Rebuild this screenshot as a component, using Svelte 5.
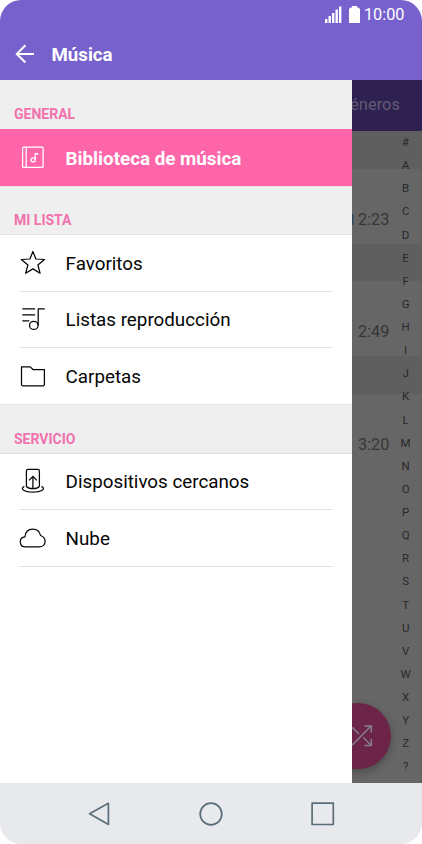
<script>
  const groups = [
    { title: 'GENERAL', items: [{ icon: 'library', label: 'Biblioteca de música', active: true }] },
    {
      title: 'MI LISTA',
      items: [
        { icon: 'star', label: 'Favoritos' },
        { icon: 'playlist', label: 'Listas reproducción' },
        { icon: 'folder', label: 'Carpetas' }
      ]
    },
    {
      title: 'SERVICIO',
      items: [
        { icon: 'device', label: 'Dispositivos cercanos' },
        { icon: 'cloud', label: 'Nube' }
      ]
    }
  ];
  const letters = [...'#ABCDEFGHIJKLMNOPQRSTUVWXYZ?'];
  const songs = ['2:23', '2:49', '3:20'];
</script>

<div class="phone">
  <header>
    <div class="status">
      <svg class="signal" width="17" height="17" viewBox="0 0 17 17" fill="#fff">
        <path d="M0 13h2.4v4H0zM3.5 10h2.4v7H3.5zM7 7h2.4v10H7zM10.5 3.5h2.4V17h-2.4zM14 .5h2.4V17H14z" />
      </svg>
      <svg class="battery" width="11" height="17" viewBox="0 0 11 17" fill="#fff">
        <path d="M3 0h5v1.6h1.5L11 3v14H0V3l1.5-1.4H3z" />
      </svg>
      <span class="clock">10:00</span>
    </div>
    <div class="title">
      <svg width="20" height="20" viewBox="0 0 20 20" fill="none" stroke="#fff" stroke-width="2">
        <path d="M19 9.9H2M10.4 1.3 1.8 9.9l8.6 8.6" />
      </svg>
      <h1>Música</h1>
    </div>
  </header>

  <main>
    <nav class="drawer">
      {#each groups as group}
        <h2>{group.title}</h2>
        <ul>
          {#each group.items as item}
            <li class:active={item.active}>
              <svg class="icon" width="28" height="28" viewBox="0 0 28 28">
                {#if item.icon === 'library'}
                  <rect x="3.6" y="4" width="20.5" height="20.4" rx="1" />
                  <path d="M7.2 4v20.4M16.2 16.9V10.7h2.4v1.4" />
                  <circle cx="14.2" cy="16.9" r="2" />
                {:else if item.icon === 'star'}
                  <path d="m13.9 2.5 3 7.5 8.6.5-6.6 5.5 2.2 8.3-7.2-4.4-7.3 4.4 2.3-8.3-6.6-5.5 8.6-.5z" />
                {:else if item.icon === 'playlist'}
                  <path d="M3.3 3.8h12.8M3.3 9.8h12.8M3.3 15.9h7M19.2 20.3V3.8h6.5" />
                  <ellipse cx="14.8" cy="20.4" rx="4.3" ry="4" />
                {:else if item.icon === 'folder'}
                  <path d="M2.5 4.9h8.7l2.8 2.6h11.4v15.4l-1 1H3.5l-1-1z" />
                {:else if item.icon === 'device'}
                  <path d="M7.4 19.5V4q0-1.7 1.7-1.7h9.6q1.7 0 1.7 1.7v15.5M13.9 21.6V9.6M10 13.4l3.9-4 3.9 4M5.3 19.4c-5 2.6.3 5.6 8.6 5.6s13.6-3 8.6-5.6M7.4 19.5c1.4 1.5 3.4 2.1 6.5 2.1s5.1-.6 6.5-2.1" />
                {:else}
                  <path d="M6.7 22.9c-3.5 0-5.4-2.3-5.4-5 0-2.8 1.8-4.8 4.6-5 .1-4.5 3.3-7.8 7.7-7.8 4 0 7.2 2.5 7.9 6.4 2.9.9 4.6 3.1 4.6 5.8 0 3.2-2.4 5.6-5.7 5.6z" />
                {/if}
              </svg>
              <span class="label">{item.label}</span>
            </li>
          {/each}
        </ul>
      {/each}
    </nav>

    <section class="behind">
      <div class="tab"><span>Géneros</span></div>
      <div class="content">
        <div class="songs">
          {#each songs as time, i}
            <div class="divider"></div>
            <div class="song" class:marked={i === 0}>{time}</div>
          {/each}
        </div>
        <div class="index">
          {#each letters as letter}<span>{letter}</span>{/each}
        </div>
      </div>
      <div class="shuffle">
        <svg width="28" height="24" viewBox="0 0 28 24" fill="none" stroke="#858085" stroke-width="1.5">
          <path d="M1 20.5h2.8L21.5 2.5M15.5 2h6.8v6.8M1 4h3l6 6M14.5 13.5l7.3 7.5M15.5 21.5h6.8v-6.8" />
        </svg>
      </div>
    </section>
  </main>

  <footer>
    <svg width="24" height="24" viewBox="0 0 24 24"><path d="M21.4 1.3v21.1L2.6 11.8z" /></svg>
    <svg width="24" height="24" viewBox="0 0 24 24"><circle cx="12" cy="12" r="10.8" /></svg>
    <svg width="24" height="24" viewBox="0 0 24 24"><rect x="1.1" y="1.1" width="21.2" height="21.4" /></svg>
  </footer>
</div>

<style>
  :global(body) {
    margin: 0;
    background: #fff;
  }
  .phone {
    width: 422px;
    height: 844px;
    display: flex;
    flex-direction: column;
    overflow: hidden;
    border-radius: 21px;
    font-family: Roboto, 'Liberation Sans', sans-serif;
  }
  header {
    height: 80px;
    background: #7661cd;
    color: #fff;
  }
  .status {
    height: 30px;
    display: flex;
    justify-content: flex-end;
    align-items: center;
    padding-right: 17.5px;
  }
  .signal { margin: -2px 7px 0 0; }
  .battery { margin: -2px 4px 0 0; }
  .clock {
    font-size: 16.3px;
    line-height: 30px;
  }
  .title {
    height: 50px;
    display: flex;
    align-items: center;
    padding-left: 15px;
    gap: 16.5px;
  }
  .title svg { margin-top: -3px; }
  h1 {
    margin: 0;
    font-size: 18.7px;
    font-weight: 700;
    line-height: 50px;
  }
  main {
    height: 703px;
    display: flex;
  }
  .drawer {
    width: 351.6px;
    background: #fff;
    flex: none;
  }
  h2 {
    margin: 0;
    height: 49px;
    box-sizing: border-box;
    padding: 25px 14px 0;
    background: #efefef;
    color: #f172ad;
    font-size: 14px;
    font-weight: 700;
    line-height: 18px;
  }
  ul + h2 {
    height: 49.4px;
    padding-top: 24.4px;
    border-top: 1px solid #e5e5e5;
    border-bottom: 1px solid #e1e1e1;
  }
  ul {
    margin: 0;
    padding: 0;
    list-style: none;
  }
  li {
    height: 56.4px;
    box-sizing: border-box;
    display: flex;
    align-items: center;
    margin: 0 19px;
    border-bottom: 1px solid #e2e2e2;
    color: #050505;
  }
  ul:not(:last-child) li:last-child { border-bottom: 0; }
  li.active {
    height: 56.8px;
    margin: 0;
    padding: 0 19px;
    background: #ff66aa;
    color: #fff;
    font-weight: 700;
  }
  .icon {
    margin-right: 18.6px;
    fill: none;
    stroke: currentColor;
    stroke-width: 1.25;
    stroke-linejoin: round;
  }
  .label {
    padding-top: 2px;
    font-size: 18.8px;
    line-height: 28px;
    white-space: nowrap;
  }
  .active .label { padding-top: 3px; }
  .behind {
    position: relative;
    flex: 1;
    display: flex;
    flex-direction: column;
    overflow: hidden;
    background: #666;
    color: #363636;
  }
  .tab {
    height: 51px;
    display: flex;
    justify-content: flex-end;
    padding-right: 22px;
    background: #2e2152;
    color: #625b75;
    font-size: 16.5px;
    line-height: 50px;
  }
  .content {
    flex: 1;
    display: flex;
    justify-content: space-between;
    border-right: 1px solid #5e5e5e;
    background: linear-gradient(#5f5f5f 38px, #666 38px, #666 113px, #5f5f5f 113px, #5f5f5f 150px, #666 150px, #666 225px, #5f5f5f 225px, #5f5f5f 263px, #666 263px);
  }
  .songs { width: 40px; }
  .divider { height: 37.5px; }
  .song {
    height: 75px;
    box-sizing: border-box;
    padding: 13px 0 0 6.4px;
    font-size: 16.3px;
    line-height: 75px;
  }
  .marked {
    background: linear-gradient(#304860, #304860) 0 45px / 1.5px 11px no-repeat;
  }
  .index {
    width: 30px;
    display: flex;
    flex-direction: column;
    align-items: center;
    box-sizing: border-box;
    padding-right: 1px;
    color: #292929;
    font-size: 11.5px;
  }
  .index span {
    flex: none;
    height: 23.14px;
    line-height: 23.14px;
  }
  .shuffle {
    position: absolute;
    left: -26.6px;
    top: 623px;
    width: 66px;
    height: 66px;
    box-sizing: border-box;
    padding-left: 9px;
    display: flex;
    align-items: center;
    justify-content: center;
    border-radius: 50%;
    background: #6c2448;
    box-shadow: 0 3px 9px rgba(0, 0, 0, 0.28);
  }
  footer {
    height: 61px;
    box-sizing: border-box;
    display: flex;
    justify-content: center;
    gap: 87.7px;
    padding-top: 18.5px;
    background: #e8e9ed;
  }
  footer svg {
    fill: none;
    stroke: #5b6d79;
    stroke-width: 1.7;
    stroke-linejoin: round;
  }
</style>
